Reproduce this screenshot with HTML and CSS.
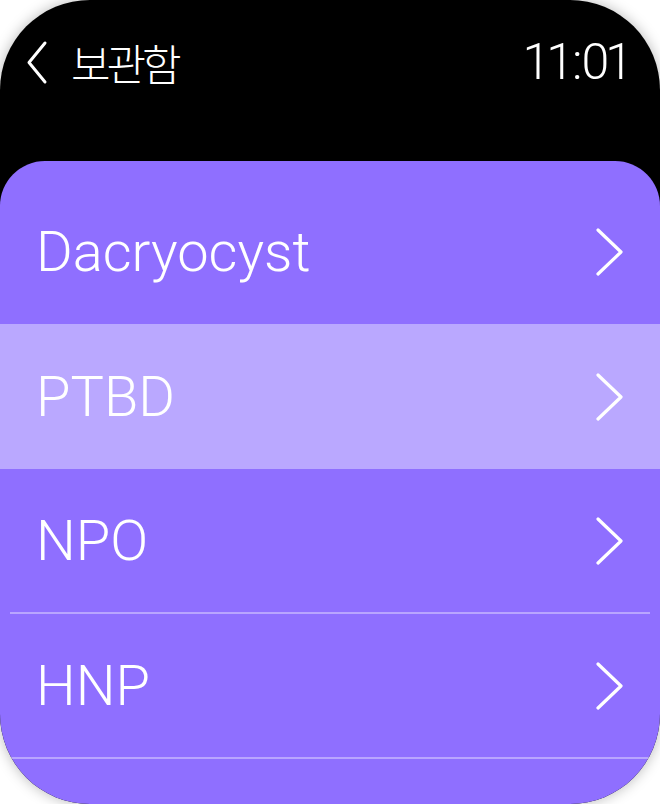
FILE: index.html
```html
<!DOCTYPE html>
<html lang="ko">
<head>
<meta charset="utf-8">
<title>보관함</title>
<link rel="stylesheet" href="styles.css">
</head>
<body>
<div class="screen">
  <header class="header">
    <div class="back">
      <svg class="back-icon" width="22" height="45" viewBox="0 0 22 45"><path d="M19 3 L3 22.5 L19 42" fill="none" stroke="#fff" stroke-width="3" stroke-linecap="round" stroke-linejoin="round"/></svg>
      <span class="title">보관함</span>
    </div>
    <span class="time">11<span class="colon">:</span>01</span>
  </header>
  <main class="card">
    <div class="row">
      <div class="row-main"><span class="label">Dacryocyst</span><svg class="chev" width="30" height="48" viewBox="0 0 30 48"><path d="M3 2 L26 24 L3 46" fill="none" stroke="#fff" stroke-width="3.2" stroke-linecap="round" stroke-linejoin="round"/></svg></div>
    </div>
    <div class="row active">
      <div class="row-main"><span class="label">PTBD</span><svg class="chev" width="30" height="48" viewBox="0 0 30 48"><path d="M3 2 L26 24 L3 46" fill="none" stroke="#fff" stroke-width="3.2" stroke-linecap="round" stroke-linejoin="round"/></svg></div>
    </div>
    <div class="row">
      <div class="row-main"><span class="label">NPO</span><svg class="chev" width="30" height="48" viewBox="0 0 30 48"><path d="M3 2 L26 24 L3 46" fill="none" stroke="#fff" stroke-width="3.2" stroke-linecap="round" stroke-linejoin="round"/></svg></div>
      <div class="sep"></div>
    </div>
    <div class="row">
      <div class="row-main"><span class="label">HNP</span><svg class="chev" width="30" height="48" viewBox="0 0 30 48"><path d="M3 2 L26 24 L3 46" fill="none" stroke="#fff" stroke-width="3.2" stroke-linecap="round" stroke-linejoin="round"/></svg></div>
      <div class="sep"></div>
    </div>
  </main>
</div>
</body>
</html>
```
FILE: styles.css
```css
html, body {
  margin: 0;
  padding: 0;
  background: #ffffff;
}
.screen {
  width: 660px;
  height: 804px;
  background: #000;
  border-radius: 90px;
  overflow: hidden;
  display: flex;
  flex-direction: column;
  box-shadow: 0 0 14px rgba(0,0,0,0.28);
  font-family: Roboto, "Noto Sans CJK KR", sans-serif;
  color: #fff;
}
.header {
  height: 124px;
  flex: none;
  display: flex;
  align-items: center;
  justify-content: space-between;
  padding: 0 31px 0 26px;
  margin-bottom: 37px;
}
.back {
  display: flex;
  align-items: center;
  gap: 23px;
}
.back-icon {
  display: block;
}
.title {
  font-family: "Noto Sans CJK KR", sans-serif;
  font-weight: 300;
  font-size: 43px;
  letter-spacing: -4px;
  line-height: 1;
}
.time {
  font-family: Roboto, sans-serif;
  font-weight: 300;
  font-size: 50px;
  letter-spacing: -4px;
  line-height: 1;
}
.colon {
  padding: 0 3px 0 2px;
}
.card {
  flex: 1;
  background: #8f6fff;
  border-radius: 45px 45px 0 0;
  padding-top: 18px;
}
.row {
  height: 145px;
  display: flex;
  flex-direction: column;
}
.row.active {
  background: #baa8ff;
}
.row-main {
  flex: 1;
  display: flex;
  align-items: center;
  justify-content: space-between;
  padding: 0 35px 0 36px;
}
.label {
  font-size: 56px;
  font-weight: 300;
  line-height: 1;
}
.chev {
  display: block;
}
.sep {
  height: 2px;
  margin: 0 10px;
  background: rgba(255,255,255,0.38);
}
```
